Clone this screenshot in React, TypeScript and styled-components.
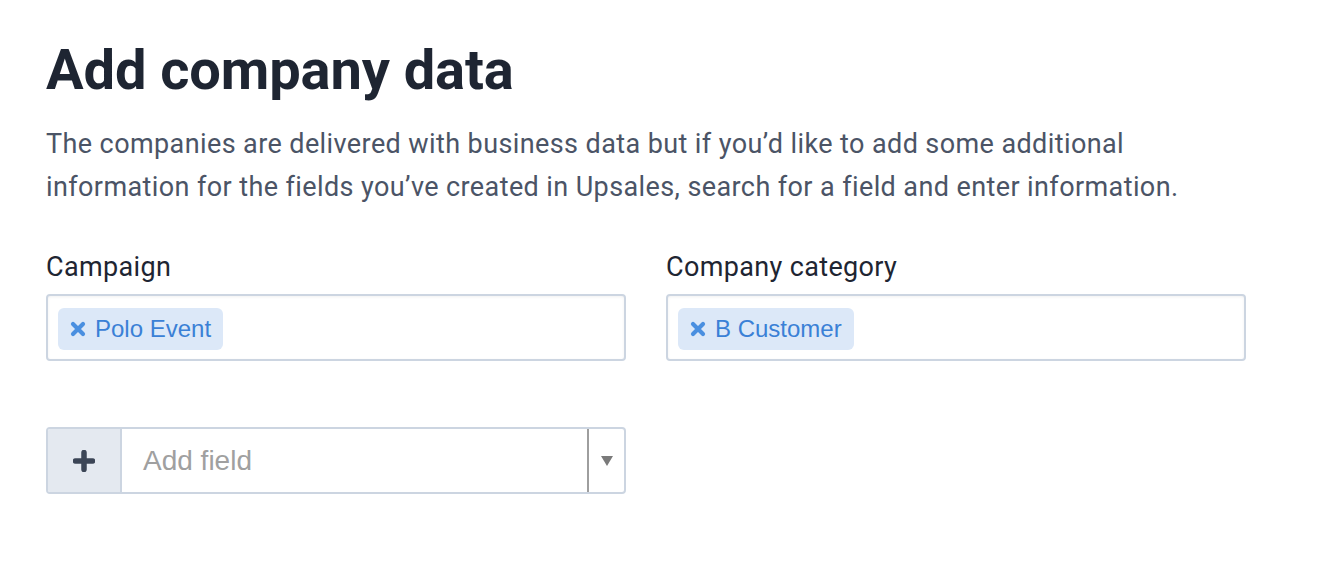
import React from "react";
import styled, { createGlobalStyle } from "styled-components";

const Global = createGlobalStyle`
  html, body { margin: 0; padding: 0; background: #ffffff; }
  body { font-family: Roboto, "Liberation Sans", sans-serif; }
`;

const Page = styled.div`
  padding: 37px 46px 0 46px;
`;

const Title = styled.h1`
  margin: 0;
  font-family: Roboto, sans-serif;
  font-weight: 700;
  font-size: 56px;
  line-height: 67px;
  color: #1e2532;
  letter-spacing: -0.1px;
`;

const Description = styled.p`
  margin: 19px 0 0 0;
  font-family: Roboto, sans-serif;
  font-size: 27px;
  line-height: 43px;
  letter-spacing: 0.4px;
  color: #4b5466;
  max-width: 1180px;
`;

const FieldsGrid = styled.div`
  display: grid;
  grid-template-columns: 580px 580px;
  column-gap: 40px;
  margin-top: 42px;
`;

const Field = styled.div`
  display: flex;
  flex-direction: column;
`;

const Label = styled.label`
  font-family: Roboto, sans-serif;
  font-size: 27px;
  line-height: 32px;
  letter-spacing: 0.35px;
  color: #1e2532;
  margin-bottom: 11px;
`;

const TagBox = styled.div`
  box-sizing: border-box;
  height: 67px;
  border: 2px solid #ccd5e1;
  border-radius: 4px;
  box-shadow: inset 0 1px 3px rgba(0, 0, 0, 0.06);
  padding: 12px 10px;
  display: flex;
  align-items: flex-start;
  gap: 8px;
  background: #fff;
`;

const Tag = styled.span`
  display: inline-flex;
  align-items: center;
  gap: 9px;
  height: 42px;
  padding: 0 12px 0 12px;
  background: #dce8f8;
  border-radius: 6px;
  font-family: "Liberation Sans", Arial, sans-serif;
  font-size: 24px;
  color: #3a80d6;
`;

const RemoveIcon = styled.svg`
  width: 16px;
  height: 16px;
  flex: none;
`;

const AddRow = styled.div`
  box-sizing: border-box;
  width: 580px;
  height: 67px;
  margin-top: 66px;
  border: 2px solid #ccd5e1;
  border-radius: 4px;
  display: flex;
  overflow: hidden;
  background: #fff;
`;

const AddButton = styled.div`
  width: 72px;
  flex: none;
  background: #e4e9f0;
  border-right: 2px solid #ccd5e1;
  display: flex;
  align-items: center;
  justify-content: center;
`;

const AddInput = styled.div`
  flex: 1;
  display: flex;
  align-items: center;
  padding-left: 21px;
  font-family: "Liberation Sans", Arial, sans-serif;
  font-size: 28px;
  color: #a0a0a0;
`;

const Caret = styled.div`
  width: 35px;
  flex: none;
  border-left: 2px solid #9e9e9e;
  display: flex;
  align-items: center;
  justify-content: center;
`;

const XIcon = () => (
  <RemoveIcon viewBox="0 0 16 16">
    <path d="M3 3 L13 13 M13 3 L3 13" stroke="#4a8fe0" strokeWidth="4.2" strokeLinecap="round" />
  </RemoveIcon>
);

export default function App() {
  return (
    <>
      <Global />
      <Page>
        <Title>Add company data</Title>
        <Description>
          The companies are delivered with business data but if you’d like to add some additional
          information for the fields you’ve created in Upsales, search for a field and enter information.
        </Description>
        <FieldsGrid>
          <Field>
            <Label>Campaign</Label>
            <TagBox>
              <Tag>
                <XIcon />
                Polo Event
              </Tag>
            </TagBox>
          </Field>
          <Field>
            <Label>Company category</Label>
            <TagBox>
              <Tag>
                <XIcon />
                B Customer
              </Tag>
            </TagBox>
          </Field>
        </FieldsGrid>
        <AddRow>
          <AddButton>
            <svg width="22" height="22" viewBox="0 0 22 22">
              <path d="M11 2.5 V19.5 M2.5 11 H19.5" stroke="#3b4556" strokeWidth="5.5" strokeLinecap="round" />
            </svg>
          </AddButton>
          <AddInput>Add field</AddInput>
          <Caret>
            <svg width="12" height="10" viewBox="0 0 12 10">
              <path d="M0 0 H12 L6 10 Z" fill="#7a7a7a" />
            </svg>
          </Caret>
        </AddRow>
      </Page>
    </>
  );
}
